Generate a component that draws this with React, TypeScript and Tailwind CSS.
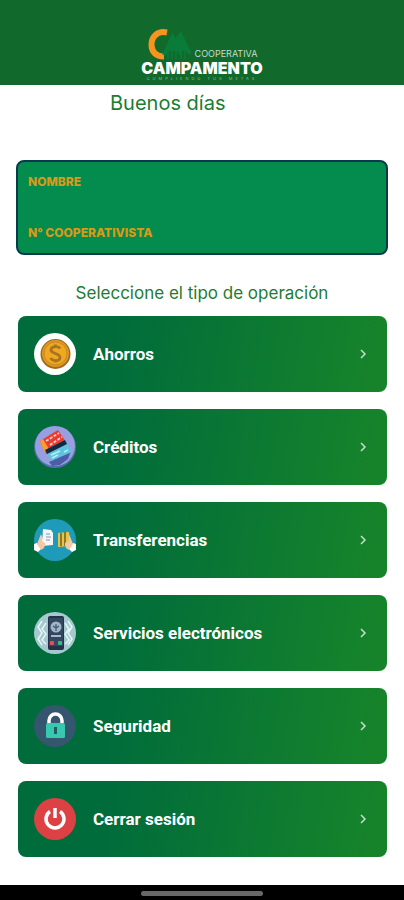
import type { ReactNode } from 'react';

function LogoMark() {
  return (
    <svg viewBox="0 0 44 31" className="h-[31px] w-11" aria-hidden="true">
      <path d="M20 3.500C10 1.500 4.500 8 4.500 15.500S9 27.500 17 27.500" fill="none" stroke="#f7931e" strokeWidth="6" />
      <path d="M17 26 25.500 8 34 25M28 13 33.500 6 43 25" fill="none" stroke="#0a7c3a" strokeWidth="4" />
      <path d="m21 22 4.500-12L31 22zM30 14l4-6 6 14h-7z" fill="#0a7c3a" />
      <path d="M21 30V20M25 30V20M29 30V20M34 30V20M38 30V20" stroke="#0a7c3a" strokeWidth="1.500" />
    </svg>
  );
}

function CoinIcon() {
  return (
    <svg viewBox="0 0 42 42" className="size-[42px]" aria-hidden="true">
      <circle cx="21" cy="21" r="21" fill="#fff" />
      <circle cx="21.500" cy="21" r="15" fill="#9c6b20" />
      <circle cx="21.500" cy="20.500" r="13.500" fill="#e0981f" />
      <circle cx="21.500" cy="20.500" r="11.500" fill="#f0a820" stroke="#c58a1e" strokeWidth="1" />
      <path
        d="M26 15.500C24.500 12.500 17 13 17 17S26 20 26 24.500 18.500 28 16.500 25M21.500 11.500V14M21.500 27V29.500"
        fill="none"
        stroke="#a87322"
        strokeWidth="2.800"
      />
    </svg>
  );
}

function CardsIcon() {
  return (
    <svg viewBox="0 0 42 42" className="size-[42px]" aria-hidden="true">
      <circle cx="21" cy="21" r="21" fill="#536ea8" />
      <circle cx="21" cy="20" r="20" fill="#979fe0" />
      <path d="m15 36 22-11-3 8-8 6-8 1z" fill="#4d5da8" />
      <path d="M6 15 24 4l8 12-20 12z" fill="#e83b32" />
      <path d="m6 15 3-2 6 10-4 4z" fill="#ff9a2c" />
      <path d="m12 15 13-8M16 19l12-8" stroke="#ffd2c2" strokeWidth="1.800" strokeDasharray="3 1.500" />
      <path d="m11 24 20-10 7 12-21 9z" fill="#5fc3df" />
      <path d="m11 24 20-10 2 4-20 10z" fill="#16283f" />
      <path d="m17 29 9-4M18 32l6-3M30 26l4-2" stroke="#b8edf5" strokeWidth="1.500" />
    </svg>
  );
}

function TransferIcon() {
  return (
    <svg viewBox="0 0 42 42" className="size-[42px] overflow-visible" aria-hidden="true">
      <circle cx="21" cy="21" r="21" fill="#209ab9" />
      <path d="m0 25 3-1 5 5-4 4-4-2zM42 25l-3-1-5 5 4 4 4-2z" fill="#fff" />
      <path d="m3 25 4-10 4 10-1 4-3 2zM39 25l-4-10-4 10 1 4 3 2z" fill="#f3c8a3" />
      <path d="m9 10 8 1 2 3v12l-11 1z" fill="#f5f5f8" />
      <path d="M12 15h4M12 18h5M12 21h4" stroke="#a8b6c8" strokeWidth="1.500" />
      <path d="m24 14 11-1v14l-11 1z" fill="#e4c74a" />
      <path d="M27 14v13M31 13v14" stroke="#725c27" strokeWidth="1.500" />
      <path d="m6 21 5 3v3l-4 1M36 21l-5 3v3l4 1" fill="#f3c8a3" />
    </svg>
  );
}

function PhoneIcon() {
  return (
    <svg viewBox="0 0 42 42" className="size-[42px]" aria-hidden="true">
      <circle cx="21" cy="21" r="21" fill="#a5c9ce" />
      <path
        d="m8 9-4 6 4 6-4 6 4 6M12 11 8 17l4 5-4 6 4 4M34 9l4 6-4 6 4 6-4 6M31 11l4 6-4 5 4 6-4 4"
        fill="none"
        stroke="#e6f5f5"
        strokeWidth="1.500"
      />
      <rect x="14" y="4" width="16" height="34" rx="2" fill="#243149" />
      <rect x="15" y="6" width="14" height="28" fill="#344660" />
      <circle cx="22" cy="15" r="5.500" fill="#9eb6c4" />
      <path d="M22 12v7M19 14l3 2 3-2" fill="none" stroke="#40566d" strokeWidth="1.200" />
      <path d="M17 24h10" stroke="#d2e1e6" strokeWidth="1.500" />
      <rect x="16" y="29" width="4" height="4" rx="1" fill="#e84c54" />
      <rect x="24" y="29" width="4" height="4" rx="1" fill="#35b995" />
    </svg>
  );
}

function LockIcon() {
  return (
    <svg viewBox="0 0 42 42" className="size-[42px]" aria-hidden="true">
      <circle cx="21" cy="21" r="21" fill="#35566f" />
      <path d="M15 20v-4.500a6.500 6.500 0 0 1 13 0V20" fill="none" stroke="#fff" strokeWidth="3.500" />
      <rect x="12" y="18" width="19" height="15" rx="1.500" fill="#38c8ad" />
      <path d="M20 22h3v7h-3z" fill="#24586a" />
    </svg>
  );
}

function PowerIcon() {
  return (
    <svg viewBox="0 0 42 42" className="size-[42px]" aria-hidden="true">
      <circle cx="21" cy="21" r="21" fill="#de4144" />
      <path d="M16 13.500a9 9 0 1 0 10 0" fill="none" stroke="#fff" strokeWidth="3.500" />
      <path d="M21 10v10" stroke="#fff" strokeWidth="3.500" />
    </svg>
  );
}

const operations: { label: string; icon: ReactNode }[] = [
  { label: 'Ahorros', icon: <CoinIcon /> },
  { label: 'Créditos', icon: <CardsIcon /> },
  { label: 'Transferencias', icon: <TransferIcon /> },
  { label: 'Servicios electrónicos', icon: <PhoneIcon /> },
  { label: 'Seguridad', icon: <LockIcon /> },
  { label: 'Cerrar sesión', icon: <PowerIcon /> },
];

export default function App() {
  return (
    <div className="flex min-h-screen flex-col bg-white font-['Inter',sans-serif]">
      <header className="flex h-[85px] flex-col items-center justify-end bg-[#12692c] pb-1 text-white">
        <div className="flex flex-col items-center">
          <div className="flex items-end">
            <LogoMark />
            <span className="pb-px pl-1 text-[9px] leading-[11px] text-[#c5dccb]">COOPERATIVA</span>
          </div>
          <div className="text-[16px] leading-4 font-black">CAMPAMENTO</div>
          <div className="text-[4px] leading-[5px] tracking-[0.75em] whitespace-nowrap text-[#8db898]">CUMPLIENDO TUS METAS</div>
        </div>
      </header>

      <main className="flex flex-1 flex-col px-4 pb-7">
        <h1 className="pt-1 pl-[94px] text-[20px] leading-7 text-[#1c7c31]">Buenos días</h1>

        <section className="mt-[43px] flex h-[95px] flex-col justify-between rounded-lg border-2 border-[#073b4b] bg-[#048b4e] px-[10px] py-3 text-[12px] leading-4 font-extrabold text-[#d99a18]">
          <p>NOMBRE</p>
          <p>N° COOPERATIVISTA</p>
        </section>

        <h2 className="mt-[26px] text-center text-[17px] leading-6 text-[#1c7c31]">Seleccione el tipo de operación</h2>

        <nav className="mt-[11px] flex flex-col gap-[17px] pr-px pl-[2px]">
          {operations.map(({ label, icon }) => (
            <button
              key={label}
              type="button"
              className="flex h-[76px] w-full items-center rounded-lg bg-[linear-gradient(100deg,#006c3b_25%,#16832b_95%)] pr-5 pl-4 text-left text-white"
            >
              {icon}
              <span className="flex-1 pl-[17px] font-['Roboto',sans-serif] text-[17px] leading-6 font-bold">{label}</span>
              <svg viewBox="0 0 8 10" className="h-[10px] w-2" aria-hidden="true">
                <path d="m2 1 4 4-4 4" fill="none" stroke="#c5dfca" strokeWidth="1.500" />
              </svg>
            </button>
          ))}
        </nav>
      </main>

      <footer className="flex h-4 items-center justify-center bg-black">
        <div className="h-[5px] w-[122px] rounded-full bg-[#686868]" />
      </footer>
    </div>
  );
}
